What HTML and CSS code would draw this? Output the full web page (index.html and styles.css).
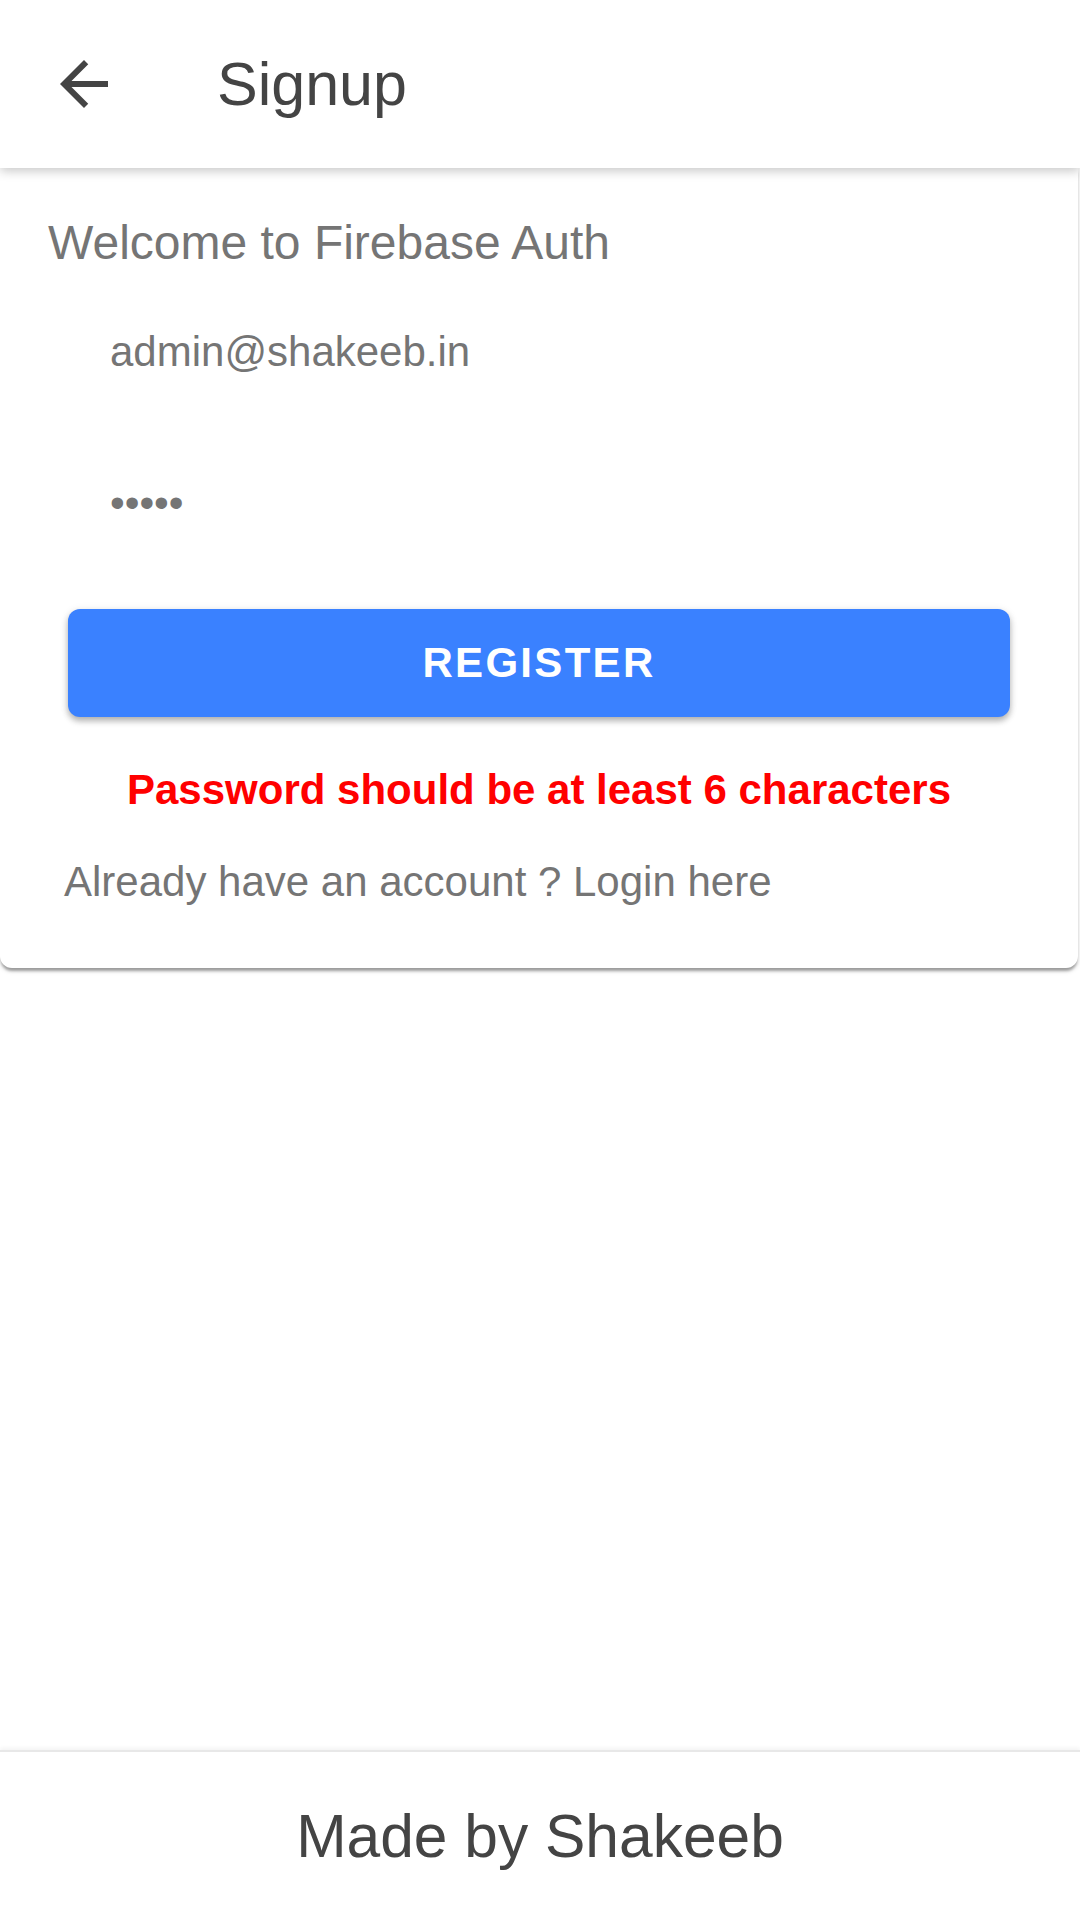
FILE: index.html
```html
<!DOCTYPE html>
<html lang="en">
<head>
<meta charset="utf-8">
<title>Signup</title>
<link rel="stylesheet" href="styles.css">
</head>
<body>
<div class="page">
  <header class="appbar">
    <button class="back" aria-label="Back">
      <svg viewBox="0 0 24 24" width="72" height="72"><path d="M20 11H7.83l5.59-5.59L12 4l-8 8 8 8 1.41-1.41L7.83 13H20v-2z" fill="#444444"/></svg>
    </button>
    <h1 class="title">Signup</h1>
  </header>

  <main class="card">
    <p class="welcome">Welcome to Firebase Auth</p>
    <input class="field field-email" type="email" value="admin@shakeeb.in" aria-label="Email">
    <input class="field field-password" type="password" value="12345" aria-label="Password">
    <button class="register">REGISTER</button>
    <p class="error">Password should be at least 6 characters</p>
    <p class="login-link">Already have an account ? Login here</p>
  </main>

  <footer class="footer">Made by Shakeeb</footer>
</div>
</body>
</html>
```

FILE: styles.css
```css
* { box-sizing: border-box; }

html, body {
  margin: 0;
  padding: 0;
  background: #ffffff;
}

body {
  font-family: "Liberation Sans", Arial, sans-serif;
}

.page {
  display: flex;
  flex-direction: column;
  min-height: 1920px;
}

.appbar {
  position: relative;
  z-index: 2;
  display: flex;
  align-items: center;
  height: 168px;
  padding-left: 48px;
  background: #ffffff;
  box-shadow: 0 3px 10px rgba(0, 0, 0, 0.22);
}

.back {
  display: flex;
  width: 72px;
  height: 72px;
  padding: 0;
  border: none;
  background: transparent;
}

.title {
  margin: 0 0 0 97px;
  font-size: 61px;
  font-weight: normal;
  color: #444444;
  line-height: 1.15;
}

.card {
  position: relative;
  z-index: 1;
  display: flex;
  flex-direction: column;
  background: #ffffff;
  border-radius: 0 0 12px 12px;
  margin-right: 2px;
  padding-bottom: 61px;
  box-shadow: 0 4px 3px -1px rgba(0, 0, 0, 0.34), 0 2px 6px rgba(0, 0, 0, 0.12);
}

.welcome {
  margin: 47px 0 0 48px;
  font-size: 48px;
  line-height: 1.15;
  color: #757575;
}

.field {
  display: block;
  margin: 0 0 0 110px;
  padding: 0;
  width: calc(100% - 220px);
  height: 48px;
  border: none;
  outline: none;
  background: transparent;
  font-family: "Liberation Sans", Arial, sans-serif;
  font-size: 42px;
  line-height: 48px;
  color: #757575;
}

.field-email {
  margin-top: 58px;
}

.field-password {
  margin-top: 103px;
}

.register {
  align-self: center;
  width: 942px;
  height: 108px;
  margin-top: 82px;
  border: none;
  border-radius: 12px;
  background: #3a81ff;
  color: #ffffff;
  font-family: "Liberation Sans", Arial, sans-serif;
  font-weight: bold;
  font-size: 42px;
  letter-spacing: 2.3px;
  box-shadow: 0 4px 6px rgba(0, 0, 0, 0.28), 0 1px 10px rgba(0, 0, 0, 0.08);
}

.error {
  margin: 49px 0 0;
  text-align: center;
  font-size: 42px;
  font-weight: bold;
  line-height: 1.15;
  color: #ff0000;
}

.login-link {
  margin: 44px 0 0 64px;
  font-size: 42px;
  line-height: 1.15;
  color: #757575;
}

.footer {
  margin-top: auto;
  height: 170px;
  display: flex;
  align-items: center;
  justify-content: center;
  border-top: 2px solid #e8e8e8;
  box-shadow: 0 -2px 4px rgba(0, 0, 0, 0.05);
  font-size: 60.5px;
  color: #444444;
}
```
